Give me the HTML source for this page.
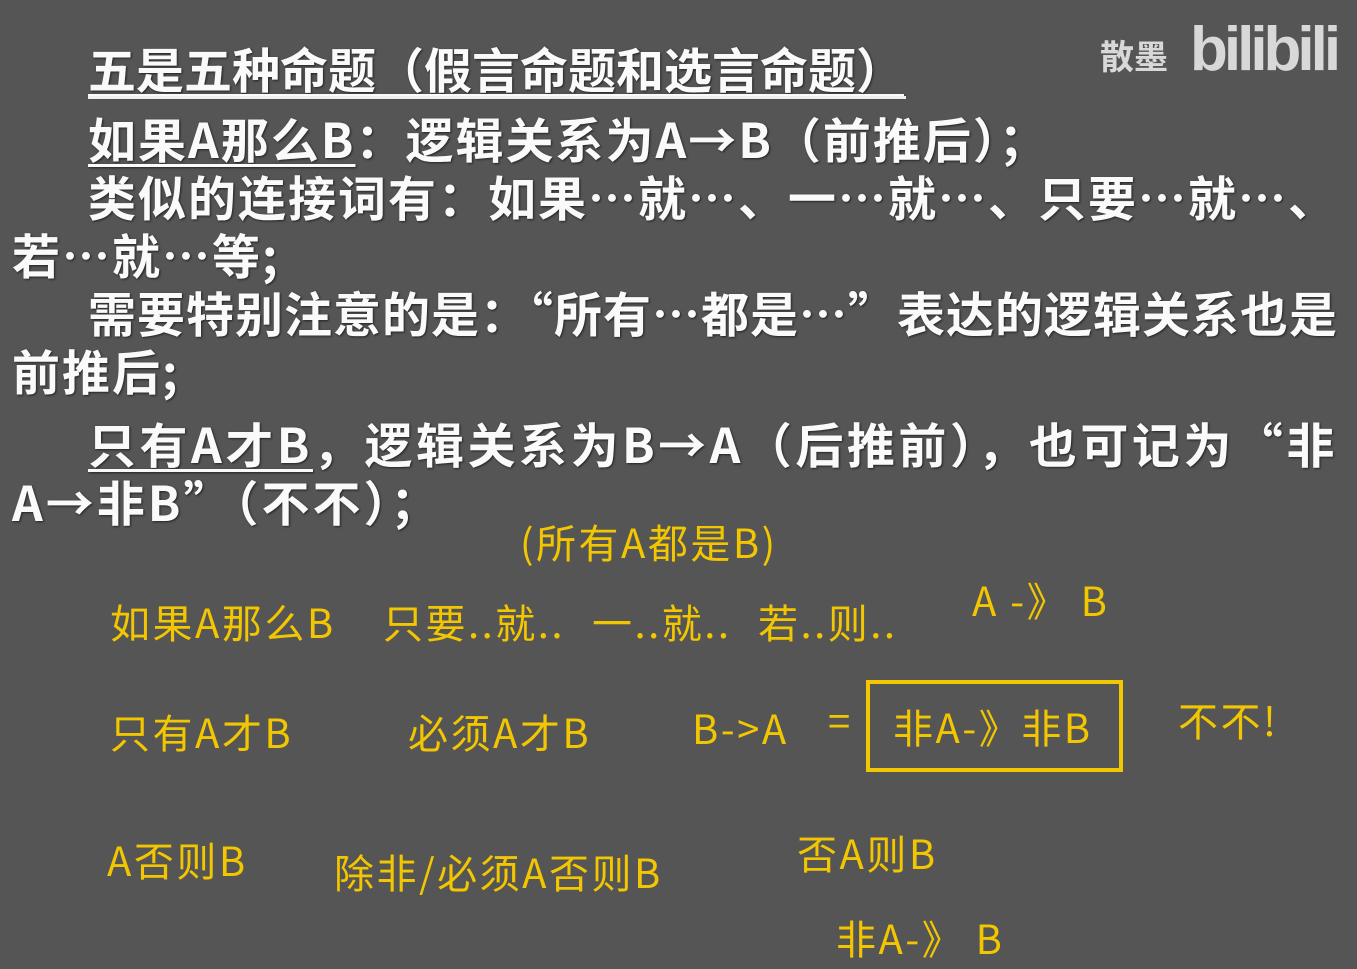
<!DOCTYPE html>
<html><head><meta charset="utf-8"><style>
html,body{margin:0;padding:0}
body{width:1357px;height:969px;background:#555555;position:relative;overflow:hidden;font-family:"Noto Sans CJK SC",sans-serif}
.w{position:absolute;white-space:nowrap;color:#fafafa;font-weight:bold;font-size:48px;line-height:58px;letter-spacing:2px;text-shadow:1px 1px 2px #222;font-family:"Noto Sans CJK SC",sans-serif}
.u{text-decoration:underline;text-decoration-thickness:3px;text-underline-offset:6px}
.y{position:absolute;white-space:nowrap;color:#f2c600;font-size:40px;line-height:46px;letter-spacing:2.5px;font-family:"Noto Sans CJK SC",sans-serif}
</style></head><body>
<div style="position:absolute;left:1100px;top:30px;color:#d8d8d8;font-size:34px;font-weight:bold;font-family:'Noto Sans CJK SC',sans-serif">散墨</div>
<div style="position:absolute;left:1190px;top:14px;color:#d8d8d8;font-size:62px;font-weight:bold;letter-spacing:-4px;font-family:'Liberation Sans',sans-serif">bilibili</div>
<div class="w u" style="left:88px;top:38px;letter-spacing:0">五是五种命题（假言命题和选言命题）</div>
<div style="position:absolute;left:88px;top:96px;width:818px;height:3px;background:#f0f0f0"></div>
<div class="w" style="left:88px;top:108px"><span class="u">如果A那么B</span>：逻辑关系为A→B（前推后）；</div>
<div class="w" style="left:88px;top:166px">类似的连接词有：如果…就…、一…就…、只要…就…、</div>
<div class="w" style="left:12px;top:224px">若…就…等;</div>
<div class="w" style="left:88px;top:282px;letter-spacing:1px">需要特别注意的是：“所有…都是…”表达的逻辑关系也是</div>
<div class="w" style="left:12px;top:340px">前推后;</div>
<div class="w" style="left:88px;top:413px;letter-spacing:3.5px"><span class="u">只有A才B</span>，逻辑关系为B→A（后推前），也可记为“非</div>
<div class="w" style="left:12px;top:471px;letter-spacing:3px">A→非B”（不不）；</div>
<div class="y" style="left:520px;top:518px">(所有A都是B)</div>
<div class="y" style="left:110px;top:598px">如果A那么B</div>
<div class="y" style="left:383px;top:598px">只要..就..</div>
<div class="y" style="left:592px;top:598px">一..就..</div>
<div class="y" style="left:758px;top:598px">若..则..</div>
<div class="y" style="left:972px;top:576px">A -》 B</div>
<div class="y" style="left:110px;top:708px">只有A才B</div>
<div class="y" style="left:408px;top:708px">必须A才B</div>
<div class="y" style="left:692px;top:704px">B-&gt;A</div>
<div class="y" style="left:828px;top:696px">=</div>
<div style="position:absolute;left:866px;top:680px;width:257px;height:92px;border:4px solid #f2c600;box-sizing:border-box"></div>
<div class="y" style="left:893px;top:703px">非A-》非B</div>
<div class="y" style="left:1178px;top:696px">不不!</div>
<div class="y" style="left:107px;top:836px">A否则B</div>
<div class="y" style="left:334px;top:848px">除非/必须A否则B</div>
<div class="y" style="left:797px;top:829px">否A则B</div>
<div class="y" style="left:836px;top:914px">非A-》 B</div>
</body></html>
